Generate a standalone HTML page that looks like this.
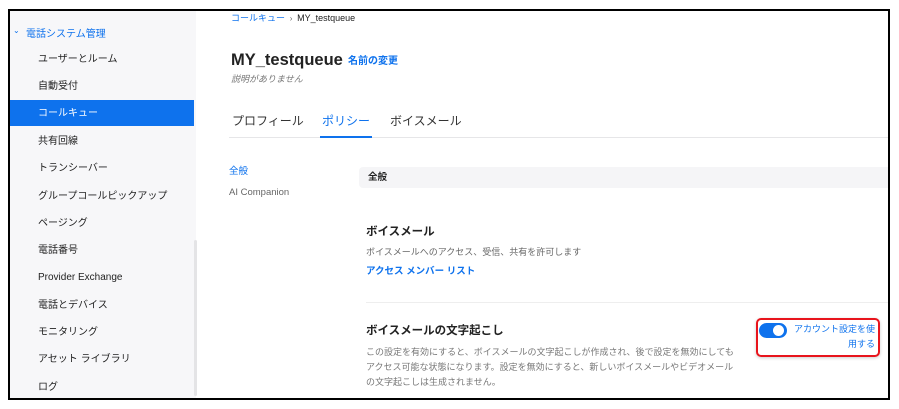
<!DOCTYPE html>
<html><head><meta charset="utf-8"><style>
*{margin:0;padding:0;box-sizing:border-box}
body{width:899px;height:409px;background:#fff;font-family:"Liberation Sans","Noto Sans CJK JP",sans-serif;position:relative;overflow:hidden;color:#222}
.frame{position:absolute;left:8px;top:9px;width:882px;height:391px;border:2px solid #000;overflow:hidden}
.side{position:absolute;left:0;top:0;width:186px;height:100%;background:#f7f7f9}
.t{position:absolute;white-space:nowrap;line-height:1.2}
.si{position:absolute;left:28px;font-size:10px;color:#222;line-height:12px;white-space:nowrap}
.blue{color:#0e72ed}
</style></head><body>
<div class="frame">
<div class="side">
 <div class="t blue" style="left:3px;top:15px;font-size:8px">⌄</div>
 <div class="si blue" style="left:16px;top:18px">電話システム管理</div>
 <div class="si" style="top:43px">ユーザーとルーム</div>
 <div class="si" style="top:70px">自動受付</div>
 <div style="position:absolute;left:0;top:89px;width:184px;height:26px;background:#0e72ed"></div>
 <div class="si" style="top:97px;color:#fff">コールキュー</div>
 <div class="si" style="top:125px">共有回線</div>
 <div class="si" style="top:152px">トランシーバー</div>
 <div class="si" style="top:180px">グループコールピックアップ</div>
 <div class="si" style="top:207px">ページング</div>
 <div class="si" style="top:234px">電話番号</div>
 <div class="si" style="top:261px">Provider Exchange</div>
 <div class="si" style="top:289px">電話とデバイス</div>
 <div class="si" style="top:316px">モニタリング</div>
 <div class="si" style="top:343px">アセット ライブラリ</div>
 <div class="si" style="top:371px">ログ</div>
 <div style="position:absolute;left:184px;top:229px;width:3px;height:156px;background:#e4e4e6;border-radius:2px"></div>
</div>
<div class="t" style="left:221px;top:2px;font-size:9px"><span class="blue">コールキュー</span> <span style="color:#666;font-size:8px">&nbsp;›&nbsp;</span> MY_testqueue</div>
<div class="t" style="left:221px;top:40px;font-size:16.5px;font-weight:bold;color:#222">MY_testqueue</div>
<div class="t blue" style="left:338px;top:45px;font-size:10px;font-weight:bold">名前の変更</div>
<div class="t" style="left:221px;top:63px;font-size:9px;color:#777;font-style:italic">説明がありません</div>
<div class="t" style="left:222px;top:103px;font-size:12px;color:#333">プロフィール</div>
<div class="t blue" style="left:312px;top:103px;font-size:12px">ポリシー</div>
<div class="t" style="left:380px;top:103px;font-size:12px;color:#333">ボイスメール</div>
<div style="position:absolute;left:219px;top:126px;width:662px;height:1px;background:#e6e6e8"></div>
<div style="position:absolute;left:310px;top:125px;width:52px;height:2px;background:#0e72ed"></div>
<div class="t blue" style="left:219px;top:155px;font-size:9.5px">全般</div>
<div class="t" style="left:219px;top:176px;font-size:9.5px;color:#666">AI Companion</div>
<div style="position:absolute;left:349px;top:156px;width:540px;height:21px;background:#f5f5f7;border-radius:4px"></div>
<div class="t" style="left:358px;top:161px;font-size:9.5px;font-weight:bold">全般</div>
<div class="t" style="left:356px;top:215px;font-size:11.5px;font-weight:bold">ボイスメール</div>
<div class="t" style="left:356px;top:236px;font-size:9px;color:#666">ボイスメールへのアクセス、受信、共有を許可します</div>
<div class="t blue" style="left:356px;top:255px;font-size:9.5px;font-weight:bold">アクセス メンバー リスト</div>
<div style="position:absolute;left:356px;top:291px;width:530px;height:1px;background:#eee"></div>
<div class="t" style="left:356px;top:314px;font-size:11.5px;font-weight:bold">ボイスメールの文字起こし</div>
<div class="t" style="left:356px;top:334px;font-size:9px;color:#777;line-height:15px">この設定を有効にすると、ボイスメールの文字起こしが作成され、後で設定を無効にしても<br>アクセス可能な状態になります。設定を無効にすると、新しいボイスメールやビデオメール<br>の文字起こしは生成されません。</div>
<div style="position:absolute;left:746px;top:307px;width:124px;height:39px;border:2px solid #e8141c;border-radius:5px;box-shadow:0 1px 3px rgba(0,0,0,.2)"></div>
<div style="position:absolute;left:749px;top:312px;width:28px;height:15px;background:#0e72ed;border-radius:8px"></div>
<div style="position:absolute;left:763px;top:314px;width:11px;height:11px;background:#fff;border-radius:50%"></div>
<div class="t blue" style="left:784px;top:313px;font-size:9px">アカウント設定を使</div>
<div class="t blue" style="left:838px;top:328px;font-size:9px">用する</div>
</div>
</body></html>
